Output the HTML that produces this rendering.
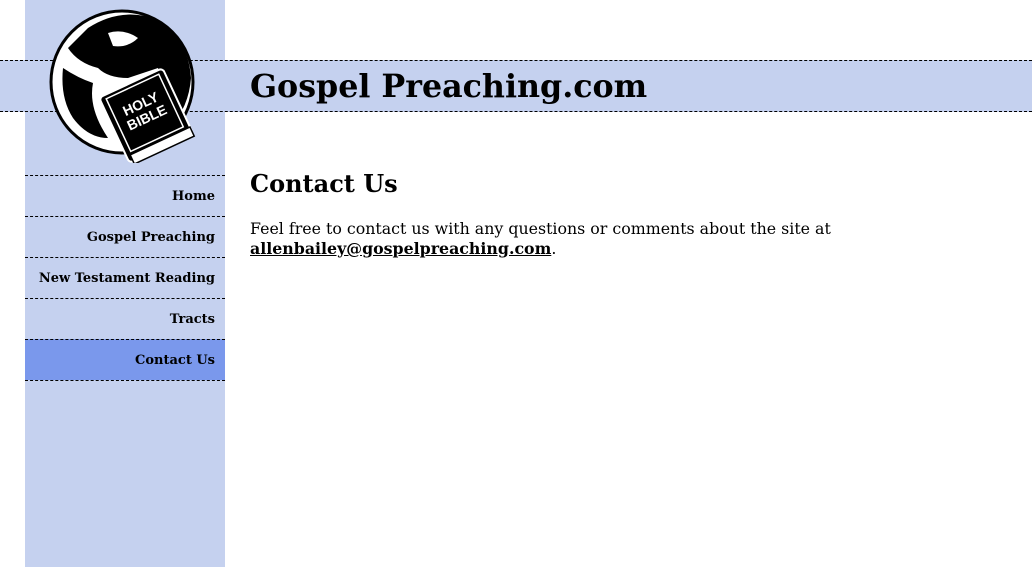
<!DOCTYPE html>
<html><head><style>
body{margin:0;width:1032px;height:567px;overflow:hidden;background:#fff;font-family:"DejaVu Serif","Liberation Serif",serif;position:relative}
.side{position:absolute;left:25px;top:0;width:200px;height:567px;background:#c5d1ef}
.band{position:absolute;left:0;top:60px;width:1032px;height:50px;background:#c5d1ef;border-top:1px dashed #000;border-bottom:1px dashed #000}
.title{position:absolute;left:250px;top:68px;font-size:31.7px;font-weight:bold;margin:0}
.logo{position:absolute;left:48px;top:8px}
.nav{position:absolute;left:25px;top:175px;width:200px}
.nav div{height:41px;border-top:1px dashed #000;text-align:right;padding-right:10px;box-sizing:border-box;font-size:13px;font-weight:bold;line-height:42px}
.nav div.last{height:0}
.nav .act{background:#7a98ec}
h2{position:absolute;left:250px;top:169px;margin:0;font-size:24px}
p{position:absolute;left:250px;top:219px;margin:0;font-size:15.8px;line-height:20px;width:700px}
a{color:#000;font-weight:bold}
</style></head><body>
<div class="side"></div>
<div class="band"></div>
<svg class="logo" width="150" height="155" viewBox="0 0 150 155">
<circle cx="74" cy="74" r="71" fill="#fff" stroke="#000" stroke-width="3"/>
<path d="M40 20 Q74 -2 110 12 Q140 30 143 70 Q140 110 105 135 L95 120 Q120 90 110 60 L80 70 Q60 70 50 60 Q30 55 20 40 Z" fill="#000"/>
<path d="M15 60 Q30 70 45 75 Q40 100 60 130 Q40 130 25 110 Q12 90 15 60Z" fill="#000"/>
<path d="M60 25 Q75 20 90 30 Q80 40 65 38Z" fill="#fff"/>
<g transform="rotate(-25 100 100)">
<rect x="60" y="70" width="70" height="72" rx="4" fill="#000" stroke="#fff" stroke-width="2"/>
<rect x="66" y="74" width="58" height="58" fill="#000" stroke="#fff" stroke-width="1.5"/>
<rect x="64" y="135" width="66" height="10" fill="#fff" stroke="#000" stroke-width="1.5"/>
<text x="95" y="98" fill="#fff" font-family="Liberation Sans,sans-serif" font-weight="bold" font-size="14" text-anchor="middle">HOLY</text>
<text x="95" y="113" fill="#fff" font-family="Liberation Sans,sans-serif" font-weight="bold" font-size="14" text-anchor="middle">BIBLE</text>
</g>
</svg>
<div class="title">Gospel Preaching.com</div>
<div class="nav">
<div>Home</div><div>Gospel Preaching</div><div>New Testament Reading</div><div>Tracts</div><div class="act">Contact Us</div><div class="last"></div>
</div>
<h2>Contact Us</h2>
<p>Feel free to contact us with any questions or comments about the site at<br><a href="#">allenbailey@gospelpreaching.com</a>.</p>
</body></html>
